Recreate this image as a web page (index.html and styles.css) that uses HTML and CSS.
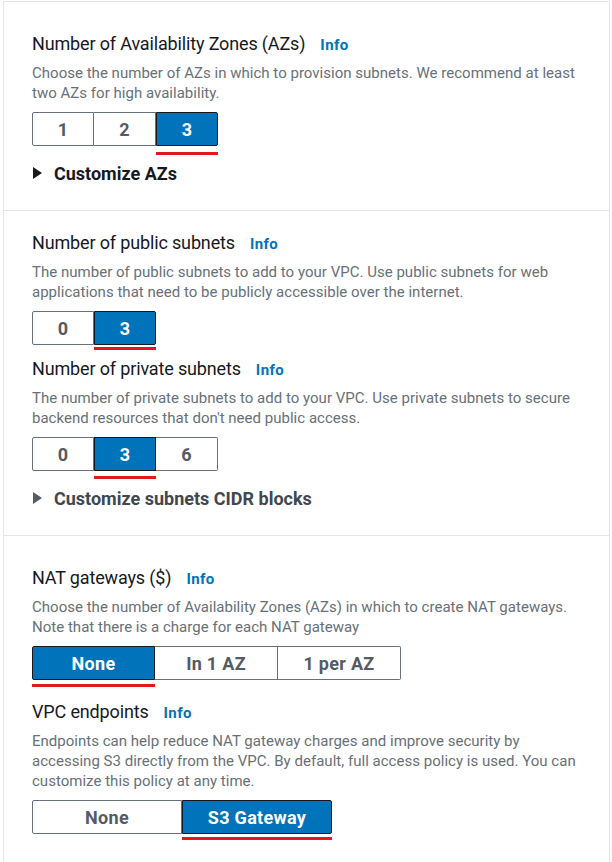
FILE: index.html
```html
<!DOCTYPE html>
<html lang="en">
<head>
<meta charset="utf-8">
<title>VPC settings</title>
<link rel="stylesheet" href="styles.css">
</head>
<body>
<div class="panel">
  <section class="section s1">
    <div class="label"><span class="label-text">Number of Availability Zones (AZs)</span><a class="info">Info</a></div>
    <p class="desc">Choose the number of AZs in which to provision subnets. We recommend at least two AZs for high availability.</p>
    <div class="seg seg-sm">
      <button class="opt">1</button>
      <button class="opt">2</button>
      <button class="opt sel">3<span class="mark m7"></span></button>
    </div>
    <div class="expander dark"><span class="caret"></span>Customize AZs</div>
  </section>

  <section class="section s2">
    <div class="label"><span class="label-text">Number of public subnets</span><a class="info">Info</a></div>
    <p class="desc">The number of public subnets to add to your VPC. Use public subnets for web applications that need to be publicly accessible over the internet.</p>
    <div class="seg seg-sm">
      <button class="opt">0</button>
      <button class="opt sel">3<span class="mark m3"></span></button>
    </div>
    <div class="label next"><span class="label-text">Number of private subnets</span><a class="info">Info</a></div>
    <p class="desc">The number of private subnets to add to your VPC. Use private subnets to secure backend resources that don't need public access.</p>
    <div class="seg seg-sm">
      <button class="opt">0</button>
      <button class="opt sel">3<span class="mark m6"></span></button>
      <button class="opt">6</button>
    </div>
    <div class="expander gray"><span class="caret"></span>Customize subnets CIDR blocks</div>
  </section>

  <section class="section s3">
    <div class="label"><span class="label-text">NAT gateways ($)</span><a class="info">Info</a></div>
    <p class="desc">Choose the number of Availability Zones (AZs) in which to create NAT gateways. Note that there is a charge for each NAT gateway</p>
    <div class="seg seg-md">
      <button class="opt sel">None<span class="mark m5"></span></button>
      <button class="opt">In 1 AZ</button>
      <button class="opt">1 per AZ</button>
    </div>
    <div class="label next-lg"><span class="label-text">VPC endpoints</span><a class="info">Info</a></div>
    <p class="desc">Endpoints can help reduce NAT gateway charges and improve security by accessing S3 directly from the VPC. By default, full access policy is used. You can customize this policy at any time.</p>
    <div class="seg seg-lg">
      <button class="opt">None</button>
      <button class="opt sel">S3 Gateway<span class="mark m4"></span></button>
    </div>
  </section>
</div>
</body>
</html>
```
FILE: styles.css
```css
* { box-sizing: border-box; }

body {
  margin: 0;
  background: #ffffff;
  font-family: Roboto, "Liberation Sans", Arial, sans-serif;
  color: #16191f;
}

.panel {
  margin: 1px 2px 0 3px;
  border: 1px solid #e4e6e6;
  border-bottom: none;
  height: 861px;
}

.section {
  padding: 0 28px 25px 28px;
}
.section + .section {
  border-top: 1px solid #e4e6e6;
}
.s1 { padding-top: 30px; }
.s2 { padding-top: 20px; }
.s3 { padding-top: 30px; }

.label {
  display: flex;
  align-items: baseline;
  gap: 15px;
  height: 24px;
  line-height: 24px;
}
.label.next { margin-top: 12px; }
.label.next-lg { margin-top: 20px; }

.label-text {
  font-size: 18px;
  letter-spacing: -0.15px;
  color: #16191f;
}

.info {
  font-size: 15px;
  font-weight: 700;
  letter-spacing: 0.4px;
  color: #0073bb;
}

.desc {
  margin: 7px 0 0 0;
  font-size: 15px;
  letter-spacing: 0.02px;
  line-height: 20px;
  color: #687078;
}

.seg {
  display: flex;
  margin-top: 9px;
  height: 34px;
}

.opt {
  position: relative;
  height: 34px;
  margin: 0;
  padding: 0;
  border: 1px solid #687078;
  background: #ffffff;
  color: #545b64;
  font-family: inherit;
  font-size: 18px;
  letter-spacing: 0.3px;
  font-weight: 700;
}
.opt + .opt { border-left: none; }
.opt:first-child { border-radius: 2px 0 0 2px; }
.opt:last-child { border-radius: 0 2px 2px 0; }

.opt.sel {
  background: #0073bb;
  color: #ffffff;
  border: 1px solid #16191f;
}

.seg-sm .opt { width: 62px; }
.seg-md .opt { width: 123px; }
.seg-lg .opt { width: 150px; }

.mark {
  position: absolute;
  left: -1px;
  right: -1px;
  height: 3px;
  background: #e0191f;
}
.m3 { top: calc(100% + 3px); }
.m4 { top: calc(100% + 4px); }
.m5 { top: calc(100% + 5px); }
.m6 { top: calc(100% + 6px); }
.m7 { top: calc(100% + 7px); }

.expander {
  display: flex;
  align-items: center;
  margin-top: 15px;
  height: 24px;
  font-size: 18px;
  font-weight: 700;
}
.expander.dark { color: #16191f; }
.expander.gray { color: #414750; }

.caret {
  width: 0;
  height: 0;
  margin: 0 12px 0 1px;
  border-top: 6px solid transparent;
  border-bottom: 6px solid transparent;
  border-left: 9px solid currentColor;
}
.expander.gray .caret { border-left-color: #545b64; }
```
